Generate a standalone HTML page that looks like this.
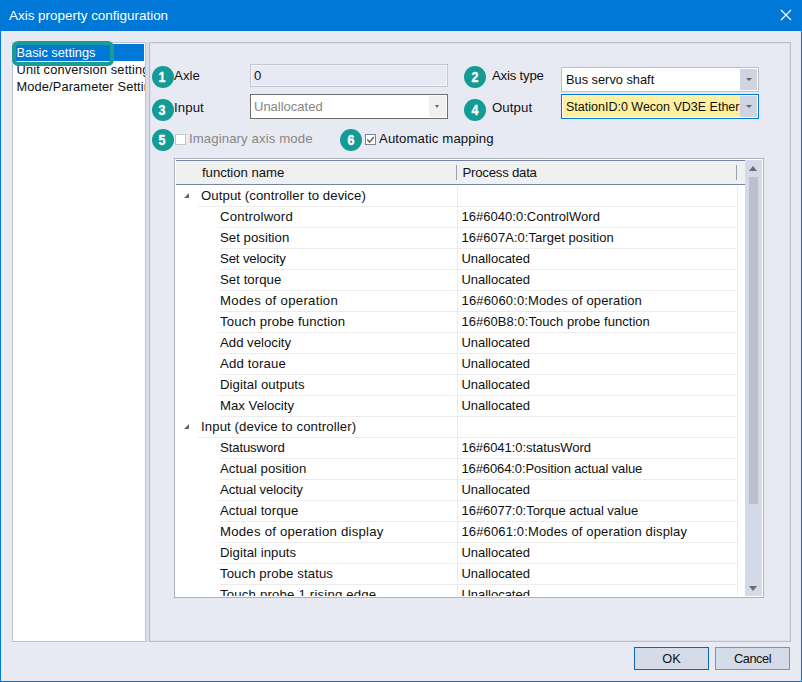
<!DOCTYPE html>
<html><head><meta charset="utf-8">
<style>
*{box-sizing:border-box;margin:0;padding:0}
html,body{width:802px;height:682px;overflow:hidden;background:#e8eaf3}
body{position:relative;font-family:"Liberation Sans","DejaVu Sans",sans-serif;font-size:13.2px;letter-spacing:.1px;color:#101010}
.abs{position:absolute}
#title{left:0;top:0;width:802px;height:31px;background:#0078d7;color:#fff}
#title span{position:absolute;left:9px;top:8px;font-size:13.45px;letter-spacing:0;white-space:nowrap}
#frame{left:0;top:0;width:802px;height:682px;border:1px solid #0078d7;border-top:none;pointer-events:none}
#list{left:12px;top:42px;width:134px;height:600px;background:#fff;border:1px solid #c0c4d0;padding:1px;overflow:hidden}
#list div{height:17px;line-height:17px;padding-left:2.5px;white-space:nowrap;font-size:12.8px;letter-spacing:0}
#list .sel{background:#0078d7;color:#fff}
#hl{left:12.2px;top:41px;width:101.6px;height:24.8px;border:4px solid #1a9c96;border-radius:6px}
#panel{left:149px;top:42px;width:642px;height:600px;border:1px solid #bcc0cb;box-shadow:inset 1px 1px 0 #dcdfe9,inset -1px -1px 0 #dcdfe9}
.circ{width:22px;height:22px;border-radius:50%;background:#149b96;color:#fff;font-size:14.5px;font-weight:bold;text-align:center;line-height:23px;letter-spacing:0}
.circ b{display:inline-block;transform:scaleX(.86);-webkit-text-stroke:.35px #fff}
.lbl{white-space:nowrap}
.gray{color:#868686}
.sm:after{left:5.7px!important;border-width:2.8px!important;border-top-width:3.2px!important}
.inp{background:#e8eaf3;border:1px solid #c3c6d0;box-shadow:inset 0 0 0 1px #f4f5f9;padding-left:3px;white-space:nowrap;overflow:hidden}
.combo{background:#fff;border:1px solid #bdbfc5;padding-left:4px;white-space:nowrap;overflow:hidden}
.arrow{position:absolute;right:1px;top:1px;bottom:1px;width:17px;background:#cfd4e3}
.arrow:after{content:"";position:absolute;left:5.5px;top:8.5px;border:3px solid transparent;border-top:3.5px solid #666;border-bottom:none}
.btn{height:23px;border:1px solid #8a8f9c;background:#d6dbe9;text-align:center;line-height:22px;letter-spacing:-.1px;font-size:12.8px}
#grid{left:174px;top:158px;width:590px;height:440px;background:#fff;border:1px solid #adb2c0;overflow:hidden}
#gi{left:1px;top:1px;width:586px;height:436px;overflow:hidden}
#hdr{left:0;top:0;width:569px;height:25px;background:#f0f0f0;border-top:1px solid #7685a3;border-bottom:1px solid #7685a3}
.row{position:absolute;left:0;width:561px;height:21px;line-height:20px;white-space:nowrap}
.row .a{position:absolute;left:44px;top:0}
.row .g{position:absolute;left:25px;top:0}
.row .b{position:absolute;left:285.5px;top:0;font-size:13px;letter-spacing:.05px}
.row .ln{position:absolute;left:44px;right:0;bottom:0;height:1px;background:#ececec}
.row.grp .ln{left:22px}
.tri{position:absolute;left:8px;top:7px;width:0;height:0;border-left:5px solid transparent;border-bottom:5px solid #666}
.vl{width:1px;background:#ececec}
#sb{left:569px;top:0;width:17px;height:436px;background:#d5dae9}
#thumb{left:573px;top:17px;width:9px;height:327px;background:#bcc0cc}
</style></head><body>
<div id="title" class="abs"><span>Axis property configuration</span>
<svg class="abs" style="left:780px;top:9px" width="12" height="12" viewBox="0 0 12 12"><path d="M1 1L11 11M11 1L1 11" stroke="#fff" stroke-width="1.1" fill="none"/></svg>
</div>
<div id="list" class="abs"><div class="sel">Basic settings</div><div style="letter-spacing:.16px">Unit conversion settings</div><div style="letter-spacing:.14px">Mode/Parameter Settings</div></div>
<div class="abs" style="left:146px;top:42px;width:3px;height:600px;background:#d9ddeb"></div>
<div id="hl" class="abs"></div>
<div id="panel" class="abs"></div>

<div class="abs circ" style="left:151.5px;top:65.5px"><b>1</b></div>
<div class="abs lbl" style="left:174px;top:68px">Axle</div>
<div class="abs inp" style="left:250px;top:64px;width:198px;height:23px;line-height:21px">0</div>

<div class="abs circ" style="left:464px;top:65.5px"><b>2</b></div>
<div class="abs lbl" style="left:492px;top:68px;letter-spacing:-.2px">Axis type</div>
<div class="abs combo" style="left:561px;top:67px;width:198px;height:25px;line-height:23px;font-size:12.8px;letter-spacing:0">Bus servo shaft<div class="arrow"></div></div>

<div class="abs circ" style="left:151.5px;top:98.5px"><b>3</b></div>
<div class="abs lbl" style="left:174px;top:100px">Input</div>
<div class="abs combo gray" style="left:250px;top:94px;width:198px;height:25px;line-height:23px;border-color:#6e6e6e;padding-left:3px;font-size:13px;letter-spacing:0">Unallocated<div class="arrow sm" style="background:#f0f0f0"></div></div>

<div class="abs circ" style="left:464px;top:98.5px"><b>4</b></div>
<div class="abs lbl" style="left:492px;top:100px">Output</div>
<div class="abs combo" style="left:561px;top:94px;width:198px;height:25px;line-height:24.5px;border:1px solid #0078d7;background:#fdf0a0;box-shadow:inset 0 0 0 1px #fff;font-size:12.5px;letter-spacing:0">StationID:0 Wecon VD3E Ether<div class="arrow"></div></div>

<div class="abs circ" style="left:151.5px;top:128.7px"><b>5</b></div>
<div class="abs" style="left:175px;top:134px;width:11px;height:11px;background:#fff;border:1px solid #c6c6c6"></div>
<div class="abs lbl gray" style="left:189px;top:131px">Imaginary axis mode</div>

<div class="abs circ" style="left:339.6px;top:128.7px"><b>6</b></div>
<div class="abs" style="left:365px;top:134px;width:11px;height:11px;background:#fff;border:1px solid #7a8198"></div>
<svg class="abs" style="left:365px;top:134px" width="11" height="11" viewBox="0 0 11 11"><path d="M2.2 5.6L4.6 8.1L8.9 3.1" stroke="#666" stroke-width="1.5" fill="none"/></svg>
<div class="abs lbl" style="left:379px;top:131px">Automatic mapping</div>

<div id="grid" class="abs"><div id="gi" class="abs">
 <div id="hdr" class="abs"></div>
 <div class="abs lbl" style="left:26px;top:5px;letter-spacing:-.05px">function name</div>
 <div class="abs lbl" style="left:286.5px;top:5px;letter-spacing:-.23px">Process data</div>
 <div class="abs" style="left:280px;top:5px;width:1px;height:15px;background:#98a0b4"></div>
 <div class="abs" style="left:560px;top:5px;width:1px;height:15px;background:#98a0b4"></div>
 <div id="rows">
  <div class="row grp" style="top:26px"><div class="tri"></div><span class="g" style="letter-spacing:0.075px">Output (controller to device)</span><div class="ln"></div></div>
  <div class="row" style="top:47px"><span class="a" style="letter-spacing:0.163px">Controlword</span><span class="b" style="letter-spacing:0.031px">16#6040:0:ControlWord</span><div class="ln"></div></div>
  <div class="row" style="top:68px"><span class="a" style="letter-spacing:0.031px">Set position</span><span class="b" style="letter-spacing:0.047px">16#607A:0:Target position</span><div class="ln"></div></div>
  <div class="row" style="top:89px"><span class="a" style="letter-spacing:-0.145px">Set velocity</span><span class="b" style="letter-spacing:-0.029px">Unallocated</span><div class="ln"></div></div>
  <div class="row" style="top:110px"><span class="a" style="letter-spacing:0.044px">Set torque</span><span class="b" style="letter-spacing:-0.029px">Unallocated</span><div class="ln"></div></div>
  <div class="row" style="top:131px"><span class="a" style="letter-spacing:0.289px">Modes of operation</span><span class="b" style="letter-spacing:0.146px">16#6060:0:Modes of operation</span><div class="ln"></div></div>
  <div class="row" style="top:152px"><span class="a" style="letter-spacing:0.143px">Touch probe function</span><span class="b" style="letter-spacing:0.038px">16#60B8:0:Touch probe function</span><div class="ln"></div></div>
  <div class="row" style="top:173px"><span class="a" style="letter-spacing:-0.001px">Add velocity</span><span class="b" style="letter-spacing:-0.029px">Unallocated</span><div class="ln"></div></div>
  <div class="row" style="top:194px"><span class="a" style="letter-spacing:0.147px">Add toraue</span><span class="b" style="letter-spacing:-0.029px">Unallocated</span><div class="ln"></div></div>
  <div class="row" style="top:215px"><span class="a" style="letter-spacing:0.081px">Digital outputs</span><span class="b" style="letter-spacing:-0.029px">Unallocated</span><div class="ln"></div></div>
  <div class="row" style="top:236px"><span class="a" style="letter-spacing:-0.003px">Max Velocity</span><span class="b" style="letter-spacing:-0.029px">Unallocated</span><div class="ln"></div></div>
  <div class="row grp" style="top:257px"><div class="tri"></div><span class="g" style="letter-spacing:0.098px">Input (device to controller)</span><div class="ln"></div></div>
  <div class="row" style="top:278px"><span class="a" style="letter-spacing:-0.138px">Statusword</span><span class="b" style="letter-spacing:-0.056px">16#6041:0:statusWord</span><div class="ln"></div></div>
  <div class="row" style="top:299px"><span class="a" style="letter-spacing:0.035px">Actual position</span><span class="b" style="letter-spacing:-0.115px">16#6064:0:Position actual value</span><div class="ln"></div></div>
  <div class="row" style="top:320px"><span class="a" style="letter-spacing:-0.106px">Actual velocity</span><span class="b" style="letter-spacing:-0.029px">Unallocated</span><div class="ln"></div></div>
  <div class="row" style="top:341px"><span class="a" style="letter-spacing:0.045px">Actual torque</span><span class="b" style="letter-spacing:-0.037px">16#6077:0:Torque actual value</span><div class="ln"></div></div>
  <div class="row" style="top:362px"><span class="a" style="letter-spacing:0.23px">Modes of operation display</span><span class="b" style="letter-spacing:0.142px">16#6061:0:Modes of operation display</span><div class="ln"></div></div>
  <div class="row" style="top:383px"><span class="a" style="letter-spacing:0.05px">Digital inputs</span><span class="b" style="letter-spacing:-0.029px">Unallocated</span><div class="ln"></div></div>
  <div class="row" style="top:404px"><span class="a" style="letter-spacing:0.087px">Touch probe status</span><span class="b" style="letter-spacing:-0.029px">Unallocated</span><div class="ln"></div></div>
  <div class="row" style="top:425px"><span class="a" style="letter-spacing:0.185px">Touch probe 1 rising edge</span><span class="b" style="letter-spacing:-0.029px">Unallocated</span><div class="ln"></div></div>
 </div>
 <div class="abs vl" style="left:281px;top:26px;height:410px"></div>
 <div class="abs vl" style="left:561px;top:26px;height:410px"></div>
 <div id="sb" class="abs"></div>
 <div id="thumb" class="abs"></div>
 <div class="abs" style="left:573px;top:6px;border:4.5px solid transparent;border-bottom:5px solid #6d6d6d;border-top:none"></div>
 <div class="abs" style="left:573px;top:426px;border:4.5px solid transparent;border-top:5px solid #6d6d6d;border-bottom:none"></div>
</div></div>

<div class="abs btn" style="left:634px;top:647px;width:75px;border-color:#0f65ae">OK</div>
<div class="abs btn" style="left:715px;top:647px;width:75px;letter-spacing:-.45px">Cancel</div>
<div id="frame" class="abs"></div>
</body></html>
